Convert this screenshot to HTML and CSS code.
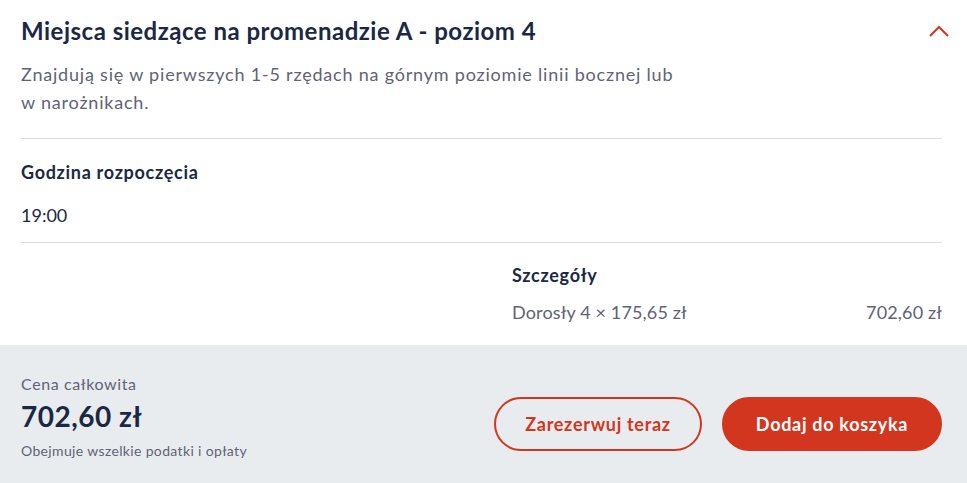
FILE: index.html
```html
<!DOCTYPE html>
<html lang="pl">
<head>
  <meta charset="UTF-8" />
  <meta name="viewport" content="width=device-width, initial-scale=1.0"/>
  <title>Miejsca siedzące</title>
  <link rel="stylesheet" href="styles.css">
</head>
<body>

  <div class="panel">
    <div class="panel-head">
      <h2>Miejsca siedzące na promenadzie A - poziom 4</h2>
      <svg class="chevron" width="20" height="13" viewBox="0 0 20 13">
        <path d="M1 11 L10 2 L19 11" fill="none" stroke="#d2361f" stroke-width="2"/>
      </svg>
    </div>
    <div class="desc">
      <p>Znajdują się w pierwszych 1-5 rzędach na górnym poziomie linii bocznej lub w narożnikach.</p>
    </div>

    <div class="section">
      <h3>Godzina rozpoczęcia</h3>
      <div class="value">19:00</div>
    </div>

    <div class="details">
      <div></div>
      <div>
        <h3>Szczegóły</h3>
        <div class="line">
          <span>Dorosły 4 × 175,65 zł</span>
          <span>702,60 zł</span>
        </div>
      </div>
    </div>
  </div>

  <div class="footer">
    <div class="total">
      <div class="total-label">Cena całkowita</div>
      <div class="total-price">702,60 zł</div>
      <div class="total-note">Obejmuje wszelkie podatki i opłaty</div>
    </div>
    <div class="actions">
      <button class="btn btn-outline">Zarezerwuj teraz</button>
      <button class="btn btn-fill">Dodaj do koszyka</button>
    </div>
  </div>

</body>
</html>
```

FILE: styles.css
```css
body {
  margin: 0;
  font-family: 'Lato', sans-serif;
  background: #fff;
  color: #1b2845;
}

.panel {
  padding: 0 25px 0 21px;
}

.panel-head {
  display: flex;
  justify-content: space-between;
  align-items: center;
  padding-top: 16px;
}

.panel-head h2 {
  margin: 0;
  font-size: 24px;
  font-weight: 700;
  line-height: 30px;
  letter-spacing: 0.5px;
  color: #1b2845;
}

.chevron {
  margin-right: -7px;
}

.desc {
  margin-top: 14px;
  padding-bottom: 22px;
  border-bottom: 1px solid #dcdde2;
}

.desc p {
  margin: 0;
  max-width: 665px;
  font-size: 18px;
  line-height: 28px;
  letter-spacing: 0.8px;
  color: #5f6378;
}

.section {
  padding: 20px 0 14px;
  border-bottom: 1px solid #dcdde2;
}

h3 {
  margin: 0;
  font-size: 18px;
  font-weight: 700;
  line-height: 26px;
  letter-spacing: 0.7px;
}

.value {
  margin-top: 17px;
  font-size: 18px;
  line-height: 26px;
}

.details {
  display: grid;
  grid-template-columns: 1fr 430px;
  padding: 19px 0 20px;
}

.line {
  display: flex;
  justify-content: space-between;
  margin-top: 11px;
  font-size: 18px;
  line-height: 26px;
  letter-spacing: 0.15px;
  color: #5f6378;
}

.footer {
  background: #e9ecef;
  display: flex;
  justify-content: space-between;
  align-items: center;
  padding: 28px 25px 30px 21px;
}

.total-label {
  font-size: 16px;
  color: #5f6378;
  line-height: 22px;
  letter-spacing: 0.6px;
}

.total-price {
  font-size: 28px;
  font-weight: 700;
  line-height: 36px;
  letter-spacing: 0.5px;
  margin-top: 3px;
}

.total-note {
  font-size: 14px;
  color: #5f6378;
  margin-top: 7px;
  line-height: 20px;
  letter-spacing: 0.35px;
}

.actions {
  display: flex;
  gap: 20px;
  margin-top: 14px;
}

.btn {
  font-family: 'Lato', sans-serif;
  font-size: 18px;
  font-weight: 700;
  letter-spacing: 0.7px;
  height: 54px;
  border-radius: 27px;
  border: 2px solid #d2361f;
  cursor: pointer;
}

.btn-outline {
  width: 208px;
  background: transparent;
  color: #d2361f;
}

.btn-fill {
  width: 220px;
  background: #d2361f;
  color: #fff;
}
```
